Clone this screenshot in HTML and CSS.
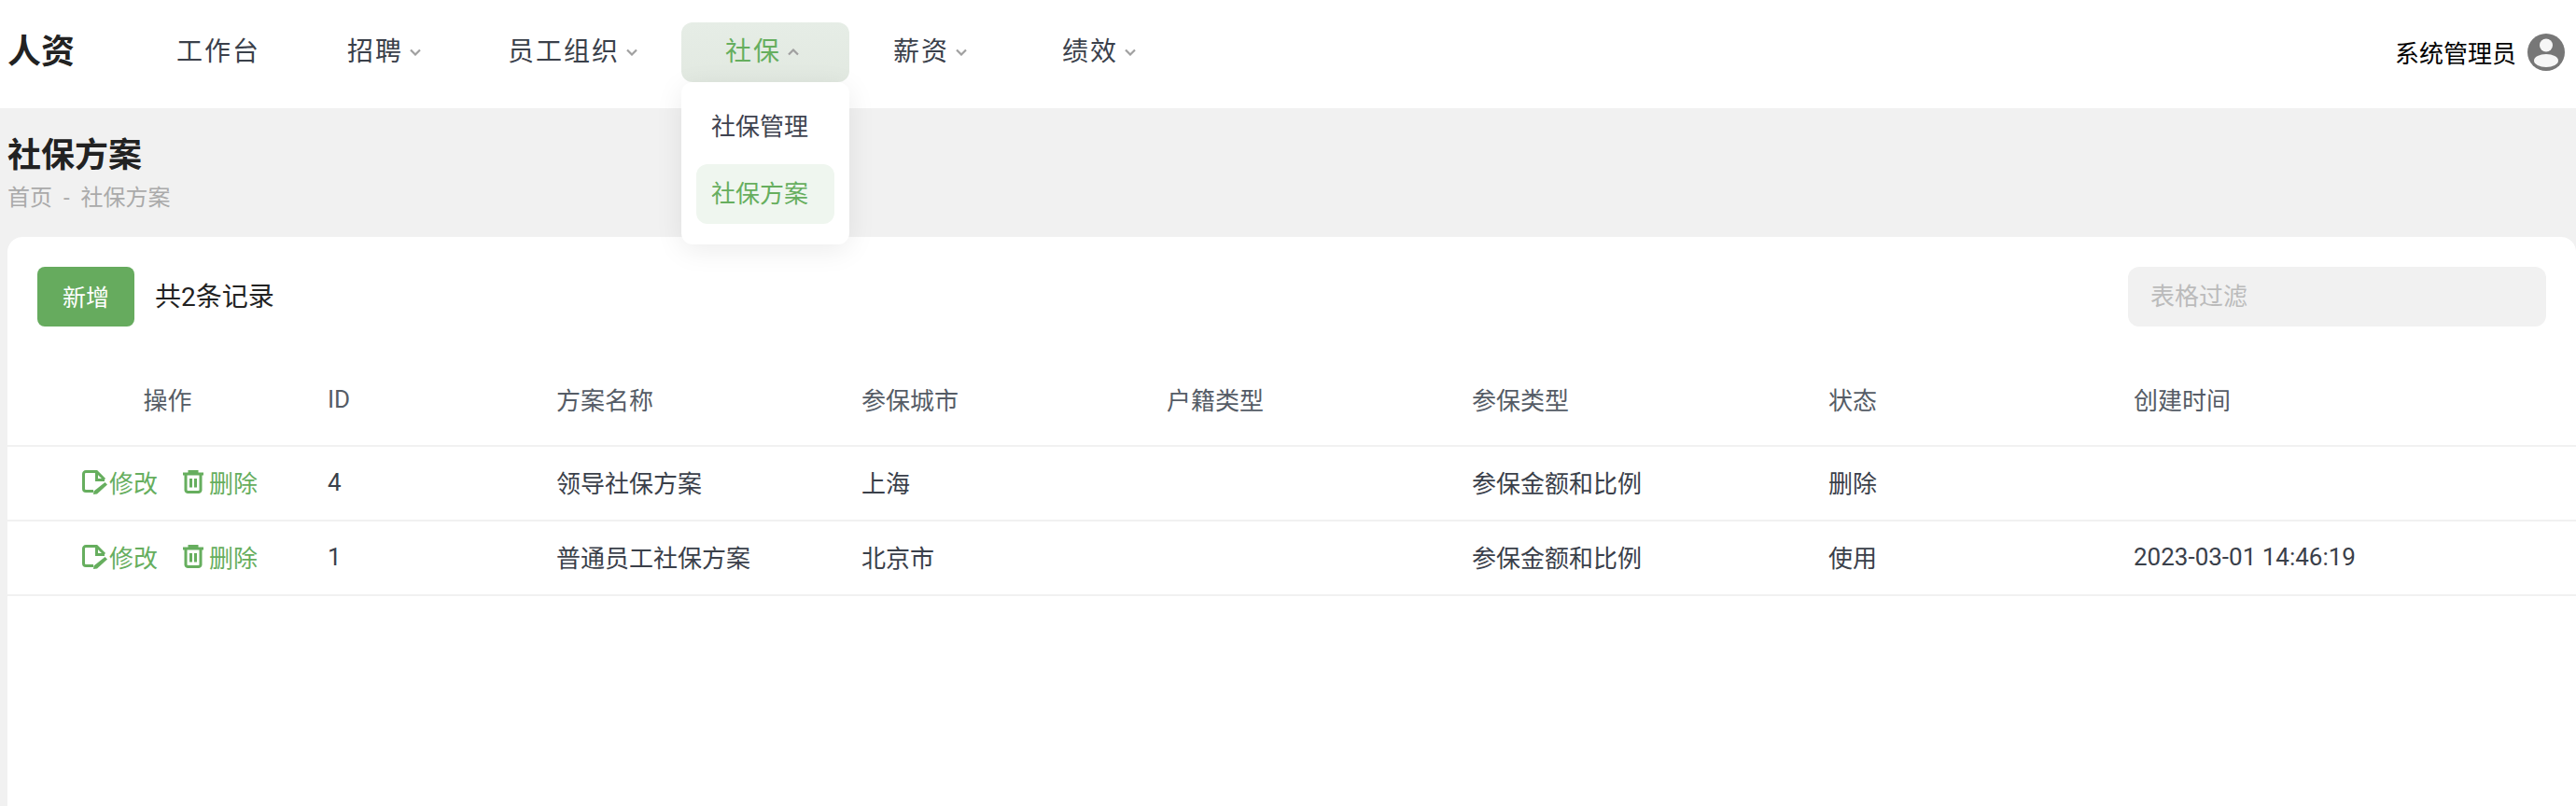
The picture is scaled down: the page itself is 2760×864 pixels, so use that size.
FILE: index.html
```html
<!DOCTYPE html>
<html lang="zh-CN">
<head>
<meta charset="utf-8">
<title>社保方案</title>
<link rel="stylesheet" href="styles.css">
</head>
<body>
<header class="topbar">
  <div class="logo">人资</div>
  <nav class="nav">
    <div class="nav-item"><span class="nav-label">工作台</span></div>
    <div class="nav-item"><span class="nav-label">招聘</span><svg class="chev" viewBox="0 0 12 8"><path d="M1 1.5l5 5 5-5"/></svg></div>
    <div class="nav-item"><span class="nav-label">员工组织</span><svg class="chev" viewBox="0 0 12 8"><path d="M1 1.5l5 5 5-5"/></svg></div>
    <div class="nav-item is-open"><span class="nav-label">社保</span><svg class="chev" viewBox="0 0 12 8"><path d="M1 6.5l5-5 5 5"/></svg>
      <div class="menu">
        <div class="menu-item">社保管理</div>
        <div class="menu-item is-active">社保方案</div>
      </div>
    </div>
    <div class="nav-item"><span class="nav-label">薪资</span><svg class="chev" viewBox="0 0 12 8"><path d="M1 1.5l5 5 5-5"/></svg></div>
    <div class="nav-item"><span class="nav-label">绩效</span><svg class="chev" viewBox="0 0 12 8"><path d="M1 1.5l5 5 5-5"/></svg></div>
  </nav>
  <div class="user">
    <span class="user-name">系统管理员</span>
    <svg class="avatar" viewBox="0 0 40 40"><circle cx="20" cy="20" r="20" fill="#777"/><circle cx="20" cy="12.500" r="7" fill="#f6f6f6"/><ellipse cx="20" cy="29" rx="13" ry="7" fill="#f6f6f6"/></svg>
  </div>
</header>
<section class="page-head">
  <h1 class="page-title">社保方案</h1>
  <div class="crumbs">首页&nbsp;&nbsp;-&nbsp;&nbsp;社保方案</div>
</section>
<main class="card">
  <div class="toolbar">
    <button class="btn">新增</button>
    <span class="count">共2条记录</span>
    <div class="filter">表格过滤</div>
  </div>
  <table class="grid">
    <colgroup>
      <col class="c0"><col class="c1"><col class="c2"><col class="c3"><col class="c4"><col class="c5"><col class="c6"><col>
    </colgroup>
    <thead>
      <tr><th class="op">操作</th><th>ID</th><th>方案名称</th><th>参保城市</th><th>户籍类型</th><th>参保类型</th><th>状态</th><th>创建时间</th></tr>
    </thead>
    <tbody>
      <tr>
        <td class="op"><div class="actions">
          <span class="act"><svg class="ico-edit" viewBox="0 0 28 26"><path class="s" d="M12 22.500H4a2.500 2.500 0 0 1-2.500-2.500V4A2.500 2.500 0 0 1 4 1.500h11.500l8.500 8.500"/><path class="s" d="M15.500 2v8.500h8.500"/><path class="f" d="M24.500 13l2.500 2.500-11 10-4 .5 .5-3.500z"/></svg>修改</span>
          <span class="act act-del"><svg class="ico-del" viewBox="0 0 22 25"><path class="s" d="M0 4h22M7 3.500V1.500h8v2"/><path class="s" d="M3 4v17.500a2.500 2.500 0 0 0 2.500 2h11a2.500 2.500 0 0 0 2.500-2V4"/><path class="s" d="M8.500 9v9.500M13.500 9v9.500"/></svg>删除</span>
        </div></td>
        <td>4</td><td>领导社保方案</td><td>上海</td><td></td><td>参保金额和比例</td><td>删除</td><td></td>
      </tr>
      <tr>
        <td class="op"><div class="actions">
          <span class="act"><svg class="ico-edit" viewBox="0 0 28 26"><path class="s" d="M12 22.500H4a2.500 2.500 0 0 1-2.500-2.500V4A2.500 2.500 0 0 1 4 1.500h11.500l8.500 8.500"/><path class="s" d="M15.500 2v8.500h8.500"/><path class="f" d="M24.500 13l2.500 2.500-11 10-4 .5 .5-3.500z"/></svg>修改</span>
          <span class="act act-del"><svg class="ico-del" viewBox="0 0 22 25"><path class="s" d="M0 4h22M7 3.500V1.500h8v2"/><path class="s" d="M3 4v17.500a2.500 2.500 0 0 0 2.500 2h11a2.500 2.500 0 0 0 2.500-2V4"/><path class="s" d="M8.500 9v9.500M13.500 9v9.500"/></svg>删除</span>
        </div></td>
        <td>1</td><td>普通员工社保方案</td><td>北京市</td><td></td><td>参保金额和比例</td><td>使用</td><td>2023-03-01 14:46:19</td>
      </tr>
    </tbody>
  </table>
</main>
</body>
</html>
```
FILE: styles.css
```css
* { box-sizing: border-box; }
html, body { height: 100%; }
body {
  margin: 0;
  background: #f1f1f1;
  font-family: Roboto, "Noto Sans CJK SC", sans-serif;
  font-size: 26px;
  color: #3a404a;
  display: flex;
  flex-direction: column;
  overflow: hidden;
}
.topbar {
  height: 116px;
  flex: none;
  background: #fff;
  display: flex;
  align-items: center;
  padding: 0 12px 4px 8px;
  position: relative;
  z-index: 2;
}
.logo {
  width: 134px;
  font-size: 36px;
  font-weight: 700;
  color: #222;
  line-height: 1;
}
.nav {
  display: grid;
  grid-template-columns: 183px 172px 233px 180px 181px 180px;
  height: 64px;
}
.nav-item {
  position: relative;
  display: flex;
  align-items: center;
  padding-left: 47px;
  border-radius: 12px;
  color: #3a404a;
}
.nav-label {
  font-size: 28px;
  letter-spacing: 2px;
  line-height: 1;
  margin-bottom: 1px;
}
.chev {
  width: 12px;
  height: 8px;
  margin-left: 7px;
  fill: none;
  stroke: #a0a0a0;
  stroke-width: 2.200;
}
.is-open {
  background: linear-gradient(#e6ede6, #e2e9e1);
  color: #66ae5e;
}
.menu {
  position: absolute;
  top: 64px;
  left: 0;
  width: 180px;
  height: 174px;
  padding: 16px;
  background: #fff;
  border-radius: 12px;
  box-shadow: 0 6px 30px rgba(0,0,0,.08);
  display: flex;
  flex-direction: column;
  gap: 8px;
}
.menu-item {
  height: 64px;
  line-height: 64px;
  padding-left: 16px;
  border-radius: 12px;
  color: #3f4350;
}
.menu-item.is-active {
  background: #eff6ef;
  color: #66ae5e;
}
.user {
  margin-left: auto;
  display: flex;
  align-items: center;
  gap: 12px;
  color: #000;
}
.user-name { margin-bottom: 2px; }
.avatar { width: 40px; height: 40px; display: block; }
.page-head {
  height: 138px;
  flex: none;
  padding: 29px 8px 0;
}
.page-title {
  margin: 0;
  font-size: 36px;
  line-height: 44px;
  font-weight: 700;
  color: #222;
}
.crumbs {
  font-size: 24px;
  line-height: 32px;
  margin-top: 7px;
  color: #aaa;
}
.card {
  flex: 1;
  margin-left: 8px;
  background: #fff;
  border-radius: 16px 16px 0 0;
}
.toolbar {
  padding: 32px 32px 0;
  display: flex;
  align-items: center;
}
.btn {
  width: 104px;
  height: 64px;
  padding: 0 0 2px;
  border: 0;
  border-radius: 8px;
  background: #66ab5e;
  color: #fff;
  font: inherit;
  font-size: 25px;
}
.count { margin: 0 0 5px 22px; color: #222; font-size: 28px; }
.filter {
  margin-left: auto;
  width: 448px;
  height: 64px;
  line-height: 64px;
  padding-left: 24px;
  border-radius: 12px;
  background: #f1f1f1;
  color: #bbb;
}
.grid {
  width: 100%;
  table-layout: fixed;
  border-collapse: collapse;
}
.c0 { width: 343px; }
.c1 { width: 245px; }
.c2 { width: 327px; }
.c3 { width: 327px; }
.c4 { width: 327px; }
.c5 { width: 382px; }
.c6 { width: 327px; }
.grid th {
  height: 128px;
  padding: 28px 0 0;
  text-align: left;
  font-weight: 400;
  color: #555c66;
  border-bottom: 2px solid #f1f1f1;
}
.grid td {
  height: 80px;
  padding: 0 0 3px;
  border-bottom: 2px solid #f1f1f1;
}
.grid .op { text-align: center; }
.actions {
  display: flex;
  padding-left: 80px;
  color: #66ae5e;
}
.act { display: flex; align-items: center; width: 108px; }
.act-del { width: auto; }
.ico-edit { width: 28px; height: 26px; margin-right: 1px; }
.ico-del { width: 22px; height: 25px; margin-right: 6px; }
.s { fill: none; stroke: #66ae5e; stroke-width: 3; }
.f { fill: #66ae5e; }
```
